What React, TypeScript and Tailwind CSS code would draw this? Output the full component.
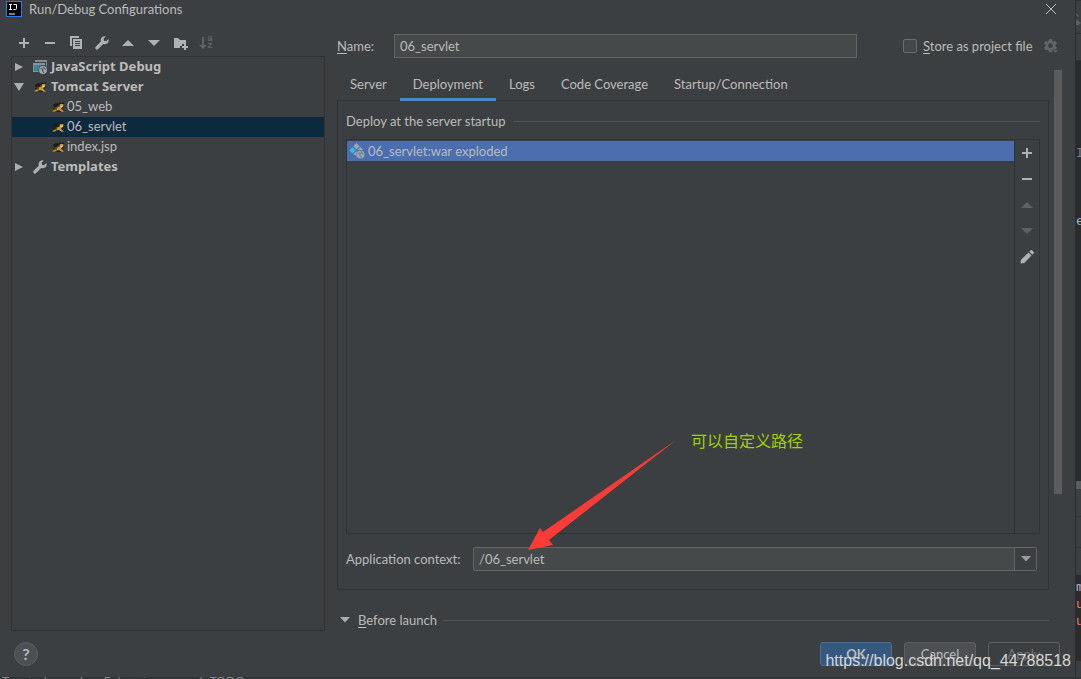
import type { ReactNode } from "react";
import clsx from "clsx";

type IconProps = { className?: string };

const IdeaLogo = () => (
  <svg width="16" height="16" viewBox="0 0 16 16" aria-hidden="true">
    <rect x="0.5" y="0.5" width="15" height="15" fill="#000" stroke="#2b7de9" />
    <path d="M3 3.5h3M4.5 3.5v5M3 8.5h3M7.5 3.5h3v4q0 1-1 1h-2M3 13h6" fill="none" stroke="#fff" />
  </svg>
);

const Plus = ({ className }: IconProps) => (
  <svg className={className} width="16" height="16" viewBox="0 0 16 16" fill="#afb1b3" aria-hidden="true">
    <path d="M7 3h2v4h4v2H9v4H7V9H3V7h4z" />
  </svg>
);

const Minus = ({ className }: IconProps) => (
  <svg className={className} width="16" height="16" viewBox="0 0 16 16" fill="#afb1b3" aria-hidden="true">
    <path d="M3 7h10v2H3z" />
  </svg>
);

const Copy = () => (
  <svg width="16" height="16" viewBox="0 0 16 16" aria-hidden="true">
    <path d="M2 1h9v2H4v8H2z" fill="#afb1b3" />
    <path fillRule="evenodd" d="M5 4h9v10H5zM7 6v1h5V6zM7 8v1h5V8zM7 10v1h5v-1z" fill="#afb1b3" />
  </svg>
);

const Wrench = () => (
  <svg width="16" height="16" viewBox="0 0 16 16" aria-hidden="true">
    <path
      d="M14.3 4.1 12.2 6.200 10 5.800 9.600 3.700 11.700 1.500C9.900 1 7.900 1.700 7 3.400C6.500 4.500 6.500 5.600 6.900 6.600L1.700 11.800C1.100 12.400 1.100 13.400 1.700 14.100C2.400 14.800 3.400 14.800 4 14.200L9.200 8.900C10.800 9.600 12.800 9.200 13.900 7.800C14.800 6.700 15 5.300 14.300 4.100Z"
      fill="#afb1b3"
    />
  </svg>
);

const ArrowUp = ({ className }: IconProps) => (
  <svg className={className} width="16" height="16" viewBox="0 0 16 16" fill="currentColor" aria-hidden="true">
    <path d="M2 11 8 5l6 6z" />
  </svg>
);

const ArrowDown = ({ className }: IconProps) => (
  <svg className={className} width="16" height="16" viewBox="0 0 16 16" fill="currentColor" aria-hidden="true">
    <path d="M2 5h12l-6 6z" />
  </svg>
);

const NewFolder = () => (
  <svg width="16" height="16" viewBox="0 0 16 16" fill="#afb1b3" aria-hidden="true">
    <path d="M2 3h4l2 2h6v4h-4v2H8v2H2z" />
    <path d="M12 9h2v2h2v2h-2v2h-2v-2h-2v-2h2z" />
  </svg>
);

const SortAz = () => (
  <span className="flex items-center text-[#606365]">
    <svg width="8" height="14" viewBox="0 0 8 14" fill="currentColor" aria-hidden="true">
      <path d="M3 1h2v8h3l-4 4-4-4h3z" />
    </svg>
    <span className="flex flex-col font-mono text-[9px] leading-[7px] font-bold">
      <span>a</span>
      <span>z</span>
    </span>
  </span>
);

const Pencil = () => (
  <svg width="16" height="16" viewBox="0 0 16 16" fill="#afb1b3" aria-hidden="true">
    <path d="M1.500 14.500 2 10.700 9.400 3.500 12.500 6.600 5.300 14z" />
    <path d="M10.300 2.700 11.700 1.300q.7-.6 1.400 0l1.600 1.600q.6.700 0 1.400L13.300 5.700z" />
  </svg>
);

const Gear = () => (
  <svg width="16" height="16" viewBox="0 0 16 16" aria-hidden="true">
    <path
      fillRule="evenodd"
      d="M6 1h3l.4 2 1.200.7 1.900-.7L14 5.600 12.500 7v1.300L14 9.700l-1.500 2.500-1.900-.6-1.200.7L9 14.300H6l-.4-2-1.200-.7-1.900.6L1 9.700l1.500-1.400V7L1 5.600 2.500 3l1.900.7L5.600 3zM7.500 5.200a2.400 2.400 0 1 0 0 4.900 2.400 2.400 0 0 0 0-4.900z"
      fill="#626568"
    />
    <path d="M9.500 12h6L12.500 15z" fill="#626568" stroke="#3c3f41" strokeWidth="0.500" />
  </svg>
);

const Globe = ({ x, y }: { x: number; y: number }) => (
  <g transform={`translate(${x} ${y})`}>
    <circle cx="4" cy="4" r="4.800" fill="#3c3f41" />
    <circle cx="4" cy="4" r="4" fill="#9aa7b0" />
    <path d="M1.500 2.500 4 3 3.500 5 5 7M5 .8 4.800 2.200 7 3.500" fill="none" stroke="#3c3f41" strokeWidth="0.900" />
  </g>
);

const JsDebug = () => (
  <svg width="16" height="16" viewBox="0 0 16 16" aria-hidden="true">
    <path d="M3 1h12v2H3zM14 3h1v5h-1z" fill="#7f8b91" />
    <path d="M1 4h12v9H1z" fill="#87939a" />
    <path d="M2 6h10v6H2z" fill="#3e86a0" />
    <Globe x={7} y={7} />
  </svg>
);

const Tomcat = () => (
  <svg width="16" height="16" viewBox="0 0 16 16" aria-hidden="true">
    <path d="M3 6 6 4 9 4.500 8 7 6 8 3 7.500zM9 3.500h2v1h1.500v-1H14V8l-2 2-3-2z" fill="#1f1c14" />
    <path d="M10 5h3.500L13.300 7.500 11.500 9l-.5.5 1 1.500 1.500 1v.8h-2L9 11 6.500 11.200 5 12.500H2.500l.3-1 1.800-.5L6.500 8.800 9.500 7.500z" fill="#c99a22" />
    <path d="M10 5.500h3v1.700l-1.500 1-1.500-1z" fill="#f3d572" />
    <path d="M3 9.500 5 9M7 12.500h4M5.500 10.500 7 9.500" stroke="#1f1c14" />
    <path d="M10.500 6h1M12.500 6h.6" stroke="#1f1c14" strokeWidth="0.800" />
  </svg>
);

const Artifact = () => (
  <svg width="16" height="16" viewBox="0 0 16 16" aria-hidden="true">
    <path d="m7.500 0 3.200 3.200-3.200 3.200-3.200-3.200z" fill="#9aa7b0" />
    <path d="m3.500 4 3.200 3.200-3.200 3.200L.3 7.200z" fill="#40b6e0" />
    <path d="m11.300 4 3 3H8.300zM7.500 8v5L4.400 11z" fill="#9aa7b0" />
    <circle cx="11.500" cy="11.500" r="4" fill="#9aa7b0" />
    <path d="M9 10 11.500 10.500 11 12.500 12.500 14.500M12.500 8.300v1.500l2 1" fill="none" stroke="#4b6eaf" strokeWidth="0.900" />
  </svg>
);

const TreeArrow = ({ open }: { open: boolean }) => (
  <svg width="16" height="16" viewBox="0 0 16 16" fill="#adadad" aria-hidden="true">
    {open ? <path d="M2 4h10l-5 8z" /> : <path d="M3 4l8 4-8 4z" />}
  </svg>
);

const ToolButton = ({ label, disabled, children }: { label: string; disabled?: boolean; children: ReactNode }) => (
  <button type="button" aria-label={label} disabled={disabled} className="flex h-[26px] w-[26px] items-center justify-center">
    {children}
  </button>
);

const GroupRow = ({ label, open, children }: { label: string; open: boolean; children: ReactNode }) => (
  <div role="treeitem" aria-expanded={open} className="flex h-5 items-center font-['Noto_Sans',sans-serif] font-bold">
    <TreeArrow open={open} />
    <span className="mr-[3px] ml-1">{children}</span>
    <span className="pb-0.5">{label}</span>
  </div>
);

const configs = ["05_web", "06_servlet", "index.jsp"];
const tabs = ["Server", "Deployment", "Logs", "Code Coverage", "Startup/Connection"];

const Sidebar = () => (
  <aside className="flex w-[314px] shrink-0 flex-col">
    <div className="flex text-[#afb1b3]">
      <ToolButton label="Add"><Plus /></ToolButton>
      <ToolButton label="Remove"><Minus /></ToolButton>
      <ToolButton label="Copy"><Copy /></ToolButton>
      <ToolButton label="Edit templates"><Wrench /></ToolButton>
      <ToolButton label="Move up"><ArrowUp /></ToolButton>
      <ToolButton label="Move down"><ArrowDown /></ToolButton>
      <ToolButton label="New folder"><NewFolder /></ToolButton>
      <ToolButton label="Sort" disabled><SortAz /></ToolButton>
    </div>
    <div role="tree" aria-label="Configurations" className="flex-1 border border-[#323232]">
      <GroupRow label="JavaScript Debug" open={false}><JsDebug /></GroupRow>
      <GroupRow label="Tomcat Server" open><Tomcat /></GroupRow>
      {configs.map((name) => (
        <div
          key={name}
          role="treeitem"
          aria-selected={name === "06_servlet"}
          className={clsx("flex h-5 items-center gap-px pl-[38px]", name === "06_servlet" && "bg-[#0d293e]")}
        >
          <Tomcat />
          <span className="pb-0.5">{name}</span>
        </div>
      ))}
      <GroupRow label="Templates" open={false}><Wrench /></GroupRow>
    </div>
  </aside>
);

const NameRow = () => (
  <div className="flex h-6 items-center pr-[3px]">
    <label htmlFor="name" className="w-[57px] shrink-0">
      <span className="underline underline-offset-2">N</span>ame:
    </label>
    <input
      id="name"
      defaultValue="06_servlet"
      className="h-6 min-w-0 flex-1 border border-[#646464] bg-[#45494a] px-[5px] outline-none"
    />
    <input
      id="store"
      type="checkbox"
      className="ml-[46px] h-3.5 w-3.5 appearance-none rounded-xs border border-[#6b6b6b] bg-[#43494a]"
    />
    <label htmlFor="store" className="ml-1.5 w-[115px] whitespace-nowrap">
      <span className="underline underline-offset-2">S</span>tore as project file
    </label>
    <button type="button" aria-label="Storage settings" className="ml-[5px]">
      <Gear />
    </button>
  </div>
);

const Deployment = () => (
  <section className="flex flex-1 flex-col border border-[#323232] px-2 pt-2.5 pb-[18px]">
    <div className="flex h-5 items-center gap-2">
      Deploy at the server startup
      <div className="h-px flex-1 bg-[#515557]" />
    </div>
    <div className="mt-2 flex flex-1 border border-[#323232]">
      <div role="listbox" aria-label="Artifacts" className="flex-1 border-r border-[#323232] pt-px">
        <div role="option" aria-selected className="flex h-5 items-center gap-[3px] bg-[#4b6eaf] pl-0.5">
          <Artifact />
          06_servlet:war exploded
        </div>
      </div>
      <div className="flex w-6 flex-col items-center text-[#5f6264]">
        <ToolButton label="Add artifact"><Plus /></ToolButton>
        <ToolButton label="Remove artifact"><Minus /></ToolButton>
        <ToolButton label="Move artifact up" disabled><ArrowUp /></ToolButton>
        <ToolButton label="Move artifact down" disabled><ArrowDown /></ToolButton>
        <ToolButton label="Edit artifact"><Pencil /></ToolButton>
      </div>
    </div>
    <div className="mt-[13px] mr-[3px] flex items-center">
      <label htmlFor="context" className="w-[127px] shrink-0">Application context:</label>
      <div className="flex h-6 flex-1 overflow-hidden rounded-xs border border-[#646464] bg-[#45494a]">
        <input id="context" defaultValue="/06_servlet" className="min-w-0 flex-1 px-[5px] outline-none" />
        <button
          type="button"
          aria-label="Show contexts"
          className="flex w-[22px] items-center justify-center border-l border-[#646464] bg-[#3c3f41] text-[#9a9da0]"
        >
          <svg width="10" height="6" viewBox="0 0 10 6" fill="currentColor" aria-hidden="true">
            <path d="M0 0h10L5 5.500z" />
          </svg>
        </button>
      </div>
    </div>
  </section>
);

const Settings = () => (
  <main className="flex min-w-0 flex-1 flex-col pt-1">
    <NameRow />
    <div className="mt-3 flex flex-1 gap-[5px]">
      <div className="flex flex-1 flex-col">
        <div role="tablist" className="flex h-[30px]">
          {tabs.map((tab) => (
            <button
              key={tab}
              type="button"
              role="tab"
              aria-selected={tab === "Deployment"}
              className={clsx(
                "relative h-[31px] border-b-3 px-[13px] whitespace-nowrap",
                tab === "Deployment" ? "border-[#4a88c7]" : "border-transparent"
              )}
            >
              {tab}
            </button>
          ))}
        </div>
        <Deployment />
        <div className="mt-5 mb-px flex h-5 items-center">
          <svg width="16" height="16" viewBox="0 0 16 16" fill="#adadad" aria-hidden="true">
            <path d="M3 5h10L8 10.500z" />
          </svg>
          <span className="mr-1.5 ml-[5px]">
            <span className="underline underline-offset-2">B</span>efore launch
          </span>
          <div className="h-px flex-1 bg-[#515557]" />
        </div>
      </div>
      <div className="h-[424px] w-2 bg-[#5a5c5e]" />
    </div>
  </main>
);

// sliver of the editor window that shows past the dialog's right edge
const EditorEdge = () => (
  <div aria-hidden="true" className="flex w-1.5 shrink-0 flex-col overflow-hidden border-l border-[#2a2c2d] bg-[#2b2b2b] font-mono">
    <div className="h-[34px] border-y border-[#2f3132] bg-[#3c3f41] pt-3">
      <svg width="6" height="12" viewBox="0 0 6 12" fill="#5f6264">
        <path d="M0 6l5 4-5 4zM0 0l3 3-1 1-2-2z" />
      </svg>
    </div>
    <div className="h-[27px] border-b border-[#2f3132] bg-[#3c3f41]" />
    <div className="flex-1 pt-[85px] leading-4 text-[#6d7f96]">
      I
      <p className="pt-[52px] text-[#8fb3d9]">e</p>
    </div>
    <div className="h-2 bg-[#5a5c5e]" />
    <div className="h-7 border-b border-[#2f3132] bg-[#3c3f41]" />
    <div className="h-[31px] border-b border-[#2f3132] bg-[#3c3f41]" />
    <div className="h-[27px] bg-[#3c3f41]" />
    <div className="h-[86px] pt-1 leading-[17px] text-[#ff6b68]">
      <p className="text-[#a9b7c6]">m</p>
      <p>u</p>
      <p>u</p>
    </div>
    <div className="h-4 bg-[#3c3f41]" />
  </div>
);

// top pixels of the IDE's tool window bar, below the dialog
const ToolWindowBar = () => (
  <div aria-hidden="true" className="flex h-0.5 overflow-hidden bg-[#323537] pl-0.5 text-xs leading-2 text-[#85888a]">
    <span className="w-[76px]">Terminal</span>
    <span className="w-[119px]">Java Enterprise</span>
    <span>6: TODO</span>
  </div>
);

const footerButton = "h-6 w-[72px] rounded-[3px] border";

export default function App() {
  return (
    <div className="relative flex min-h-screen flex-col overflow-hidden bg-[#3c3f41] font-['Lato','Noto_Sans_CJK_SC',sans-serif] text-[13px] leading-5 text-[#bbbbbb]">
      <div className="flex flex-1">
        <div role="dialog" aria-labelledby="title" className="flex flex-1 flex-col">
          <header className="flex h-[18px] items-center gap-[7px] pr-[15px] pl-1.5">
            <IdeaLogo />
            <h1 id="title" className="flex-1">Run/Debug Configurations</h1>
            <button type="button" aria-label="Close" className="p-1">
              <svg width="10" height="10" viewBox="0 0 10 10" stroke="#bbbbbb" aria-hidden="true">
                <path d="M0 0l10 10M10 0L0 10" />
              </svg>
            </button>
          </header>
          <div className="mt-3 flex flex-1 gap-3 pr-[13px] pl-[11px]">
            <Sidebar />
            <Settings />
          </div>
          <footer className="flex items-center gap-3 pt-[11px] pr-[15px] pb-[11px] pl-3.5">
            <button type="button" aria-label="Help" className="h-6 w-6 rounded-full border border-[#5e6060] bg-[#4c5052] text-base leading-5 font-bold">
              ?
            </button>
            <div className="flex-1" />
            <button type="button" className={clsx(footerButton, "border-[#4c708c] bg-[#365880] font-bold")}>OK</button>
            <button type="button" className={clsx(footerButton, "border-[#5e6060] bg-[#4c5052]")}>Cancel</button>
            <button type="button" disabled className={clsx(footerButton, "border-[#5e6060] text-[#777777]")}>Apply</button>
          </footer>
        </div>
        <EditorEdge />
      </div>
      <ToolWindowBar />

      <svg className="absolute top-[440px] left-[528px]" width="148" height="112" viewBox="0 0 148 112" aria-hidden="true">
        <path d="M148 0 15 92 12 88 0 110 25 105 21 100z" fill="#ff3b38" />
      </svg>
      <p className="absolute top-[428px] left-[691px] font-['Noto_Sans_CJK_SC',sans-serif] text-base leading-6 text-[#a0d000]">可以自定义路径</p>
      <p className="absolute right-2.5 bottom-1.5 font-['Liberation_Sans',sans-serif] text-base leading-6 text-[#d6d6d6]">
        https://blog.csdn.net/qq_44788518
      </p>
    </div>
  );
}
